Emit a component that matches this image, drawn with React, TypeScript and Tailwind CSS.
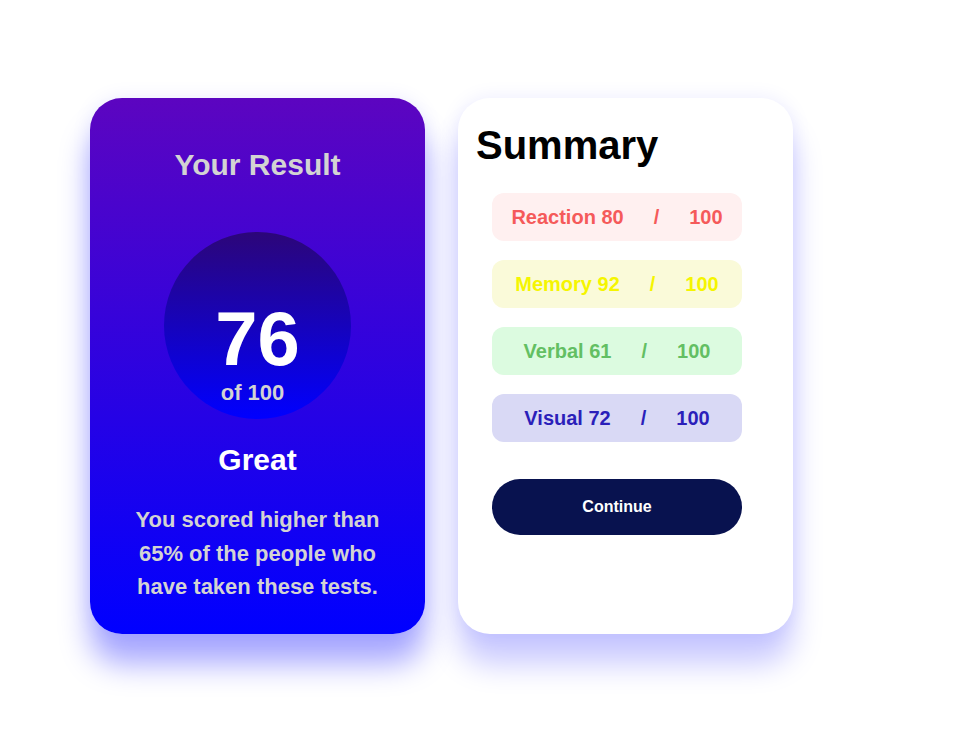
import React from 'react'

const rows = [
  { label: 'Reaction', score: 80, text: 'text-[#f55a5a]', bg: 'bg-[#fff0f0]' },
  { label: 'Memory', score: 92, text: 'text-[#f5f500]', bg: 'bg-[#fafad9]' },
  { label: 'Verbal', score: 61, text: 'text-[#63bf63]', bg: 'bg-[#dcfbe0]' },
  { label: 'Visual', score: 72, text: 'text-[#2b1fba]', bg: 'bg-[#d9d9f5]' },
]

const App = () => {
  return (
    <main className="min-h-[743px] bg-white pl-[90px] pt-[98px] font-['Liberation_Sans',Arial,sans-serif] font-bold">
      <div className="flex gap-[33px]">
        <section className="flex h-[536px] w-[335px] flex-col items-center rounded-[32px] bg-[linear-gradient(#5c05c0,#0000ff)] shadow-[0_30px_30px_rgba(0,0,255,0.34),0_0_20px_rgba(0,0,255,0.08)]">
          <h1 className="mt-[49px] text-[30px] leading-[36px] text-[#d3d3d3]">Your Result</h1>
          <div className="mt-[49px] flex h-[187px] w-[187px] flex-col items-center justify-center rounded-full bg-[linear-gradient(#2c0679,#0000ff)]">
            <div className="mt-[56px] text-[76px] leading-[76px] text-white">76</div>
            <div className="-ml-[10px] mt-[3px] text-[22px] leading-[26px] text-[#d3d3d3]">of 100</div>
          </div>
          <h2 className="mt-[23px] text-[30px] leading-[36px] text-white">Great</h2>
          <p className="mt-[25px] px-[40px] text-center text-[22px] leading-[33.5px] text-[#d3d3d3]">
            You scored higher than 65% of the people who have taken these tests.
          </p>
        </section>

        <section className="h-[536px] w-[335px] rounded-[32px] bg-white pl-[34px] pt-[24px] shadow-[0_30px_30px_rgba(0,0,255,0.21),0_0_20px_rgba(0,0,255,0.08)]">
          <h1 className="-ml-[16px] text-[40px] leading-[46px] text-black">Summary</h1>
          <div className="mt-[25px] flex w-[250px] flex-col gap-[19px]">
            {rows.map((row) => {
              return (
                <div
                  key={row.label}
                  className={`flex h-[48px] items-center justify-center gap-[30px] rounded-[12px] text-[20px] ${row.bg} ${row.text}`}
                >
                  <span>
                    {row.label} {row.score}
                  </span>
                  <span>/</span>
                  <span>100</span>
                </div>
              )
            })}
          </div>
          <button className="mt-[37px] h-[56px] w-[250px] rounded-full bg-[#08124f] text-[16px] text-white">
            Continue
          </button>
        </section>
      </div>
    </main>
  )
}

export default App
